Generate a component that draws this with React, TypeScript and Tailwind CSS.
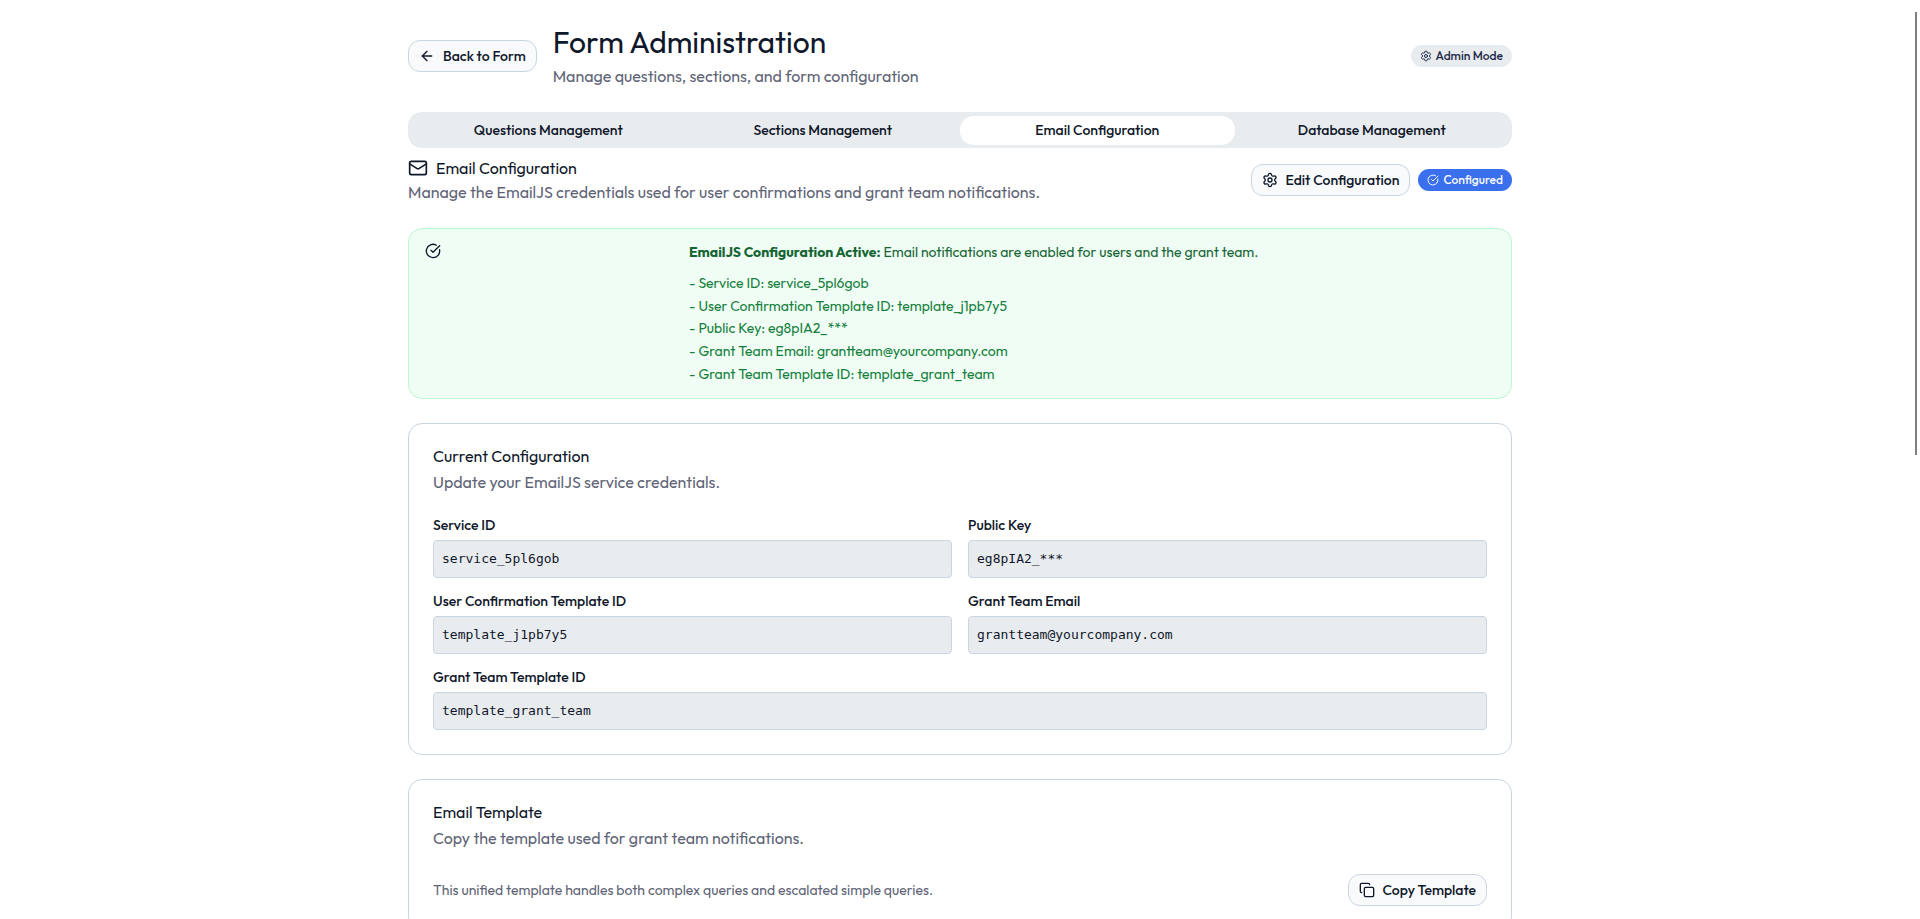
import { ReactNode } from 'react';
import { ArrowLeft, CircleCheckBig, Copy, Mail, Settings } from 'lucide-react';

const tabs = ['Questions Management', 'Sections Management', 'Email Configuration', 'Database Management'];
const activeTab = 'Email Configuration';

const summary = [
  'Service ID: service_5pl6gob',
  'User Confirmation Template ID: template_j1pb7y5',
  'Public Key: eg8pIA2_***',
  'Grant Team Email: grantteam@yourcompany.com',
  'Grant Team Template ID: template_grant_team',
];

const fields = [
  { id: 'service-id', label: 'Service ID', value: 'service_5pl6gob', wide: false },
  { id: 'public-key', label: 'Public Key', value: 'eg8pIA2_***', wide: false },
  { id: 'user-template', label: 'User Confirmation Template ID', value: 'template_j1pb7y5', wide: false },
  { id: 'team-email', label: 'Grant Team Email', value: 'grantteam@yourcompany.com', wide: false },
  { id: 'team-template', label: 'Grant Team Template ID', value: 'template_grant_team', wide: true },
];

function OutlineButton({ icon, children }: { icon: ReactNode; children: ReactNode }) {
  return (
    <button
      type="button"
      className="flex h-8 shrink-0 items-center gap-2 rounded-[12px] border border-[#cad5e2] bg-[#f8fafc] px-2.5 text-sm leading-5 font-medium whitespace-nowrap"
    >
      {icon}
      {children}
    </button>
  );
}

function Card({ title, description, children }: { title: string; description: string; children: ReactNode }) {
  return (
    <section className="flex flex-col gap-6 rounded-[14px] border border-[#cad5e2] bg-white p-6">
      <header className="flex flex-col gap-1.5">
        <h3 className="text-base leading-4">{title}</h3>
        <p className="text-base leading-6 text-[#5f6577]">{description}</p>
      </header>
      {children}
    </section>
  );
}

export default function App() {
  return (
    <div className="h-screen overflow-y-auto bg-white font-['Outfit','Lato','Liberation_Sans',sans-serif] text-[#0f172a] antialiased [scrollbar-width:none]">
      <main className="mx-auto flex max-w-6xl flex-col gap-6 p-6">
        <header className="flex items-center justify-between">
          <div className="flex items-center gap-4">
            <OutlineButton icon={<ArrowLeft className="size-4" />}>Back to Form</OutlineButton>
            <div className="flex flex-col gap-1">
              <h1 className="text-[30px] leading-9">Form Administration</h1>
              <p className="text-base leading-6 text-[#5f6577]">Manage questions, sections, and form configuration</p>
            </div>
          </div>
          <span className="flex h-[22px] items-center gap-1 rounded-full border border-transparent bg-[#e9ecef] px-2 text-xs leading-4 font-medium text-[#1e2a4a]">
            <Settings className="size-3" />
            Admin Mode
          </span>
        </header>

        <div className="flex flex-col gap-2">
          <nav role="tablist" className="grid h-9 grid-cols-4 items-center rounded-[14px] bg-[#e9ecef] px-[3px]">
            {tabs.map((tab) => (
              <button
                key={tab}
                type="button"
                role="tab"
                aria-selected={tab === activeTab}
                className="h-[29px] rounded-[14px] text-sm leading-5 font-medium aria-selected:bg-white"
              >
                {tab}
              </button>
            ))}
          </nav>

          <div className="flex flex-col gap-6">
            <div className="flex items-center justify-between">
              <div>
                <h2 className="flex items-center gap-2 text-base leading-6">
                  <Mail className="size-5" />
                  Email Configuration
                </h2>
                <p className="text-base leading-6 text-[#5f6577]">
                  Manage the EmailJS credentials used for user confirmations and grant team notifications.
                </p>
              </div>
              <div className="flex items-center gap-2">
                <OutlineButton icon={<Settings className="size-4" />}>Edit Configuration</OutlineButton>
                <span className="flex h-[22px] items-center gap-1 rounded-full border border-transparent bg-[#3a70ee] px-2 text-xs leading-4 font-medium text-[#f8fafc]">
                  <CircleCheckBig className="size-3" />
                  Configured
                </span>
              </div>
            </div>

            <div role="status" className="grid grid-cols-[264px_1fr] rounded-[14px] border border-[#bbf7d0] bg-[#f0fdf4] px-4 py-3 text-sm leading-relaxed">
              <CircleCheckBig className="mt-0.5 size-4" />
              <div className="flex flex-col gap-2">
                <p className="text-[#166534]">
                  <strong className="font-bold">EmailJS Configuration Active:</strong> Email notifications are enabled for users and the grant team.
                </p>
                <ul className="text-[#15803d]">
                  {summary.map((line) => (
                    <li key={line}>- {line}</li>
                  ))}
                </ul>
              </div>
            </div>

            <Card title="Current Configuration" description="Update your EmailJS service credentials.">
              <div className="grid grid-cols-2 gap-4">
                {fields.map((field) => (
                  <div key={field.id} className={field.wide ? 'col-span-2 flex flex-col gap-2' : 'flex flex-col gap-2'}>
                    <label htmlFor={field.id} className="text-sm leading-[14px] font-medium">
                      {field.label}
                    </label>
                    <input
                      id={field.id}
                      readOnly
                      value={field.value}
                      className="h-[38px] w-full rounded border border-[#cad5e2] bg-[#e9ecef] p-2 font-['Consolas','DejaVu_Sans_Mono',monospace] text-[13px] leading-5 outline-none"
                    />
                  </div>
                ))}
              </div>
            </Card>

            <Card title="Email Template" description="Copy the template used for grant team notifications.">
              <div className="flex items-center justify-between">
                <p className="text-sm leading-5 text-[#5f6577]">
                  This unified template handles both complex queries and escalated simple queries.
                </p>
                <OutlineButton icon={<Copy className="size-4" />}>Copy Template</OutlineButton>
              </div>
            </Card>
          </div>
        </div>
      </main>
      <div aria-hidden="true" className="fixed top-3 right-[3px] h-[443px] w-0.5 bg-[#808080]" />
    </div>
  );
}
